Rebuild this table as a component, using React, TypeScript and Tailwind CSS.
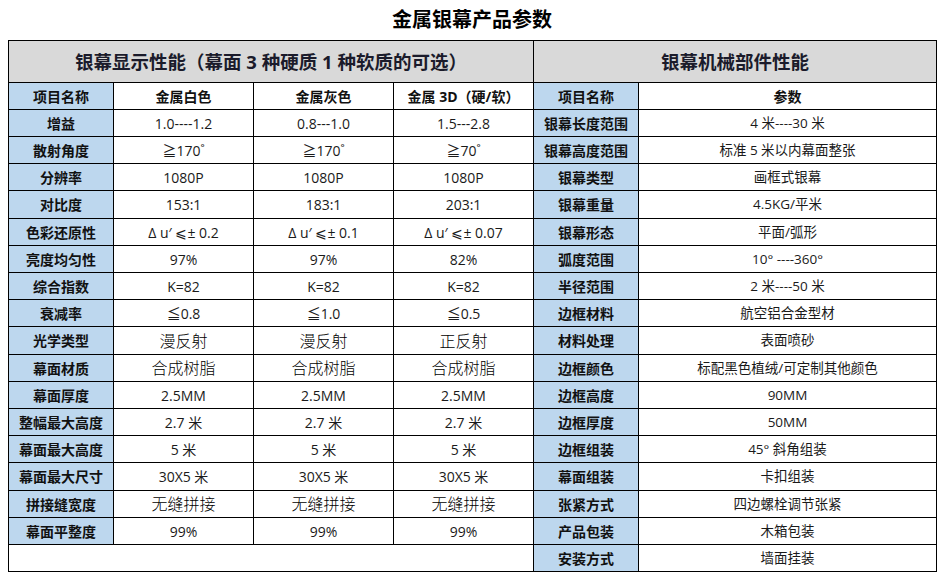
const leftRows: [string, string, string, string][] = [
  ["增益", "1.0----1.2", "0.8---1.0", "1.5---2.8"],
  ["散射角度", "≧170˚", "≧170˚", "≧70˚"],
  ["分辨率", "1080P", "1080P", "1080P"],
  ["对比度", "153:1", "183:1", "203:1"],
  ["色彩还原性", "Δ u′  ⩽± 0.2", "Δ u′  ⩽± 0.1", "Δ u′  ⩽± 0.07"],
  ["亮度均匀性", "97%", "97%", "82%"],
  ["综合指数", "K=82", "K=82", "K=82"],
  ["衰减率", "≦0.8", "≦1.0", "≦0.5"],
  ["光学类型", "漫反射", "漫反射", "正反射"],
  ["幕面材质", "合成树脂", "合成树脂", "合成树脂"],
  ["幕面厚度", "2.5MM", "2.5MM", "2.5MM"],
  ["整幅最大高度", "2.7 米", "2.7 米", "2.7 米"],
  ["幕面最大高度", "5 米", "5 米", "5 米"],
  ["幕面最大尺寸", "30X5 米", "30X5 米", "30X5 米"],
  ["拼接缝宽度", "无缝拼接", "无缝拼接", "无缝拼接"],
  ["幕面平整度", "99%", "99%", "99%"],
];

const rightRows: [string, string][] = [
  ["银幕长度范围", "4 米----30 米"],
  ["银幕高度范围", "标准 5 米以内幕面整张"],
  ["银幕类型", "画框式银幕"],
  ["银幕重量", "4.5KG/平米"],
  ["银幕形态", "平面/弧形"],
  ["弧度范围", "10° ----360°"],
  ["半径范围", "2 米----50 米"],
  ["边框材料", "航空铝合金型材"],
  ["材料处理", "表面喷砂"],
  ["边框颜色", "标配黑色植绒/可定制其他颜色"],
  ["边框高度", "90MM"],
  ["边框厚度", "50MM"],
  ["边框组装", "45° 斜角组装"],
  ["幕面组装", "卡扣组装"],
  ["张紧方式", "四边螺栓调节张紧"],
  ["产品包装", "木箱包装"],
  ["安装方式", "墙面挂装"],
];

const cjk = "font-['Open_Sans','Noto_Sans_CJK_SC',sans-serif]";
const cell = "border border-black text-center align-middle p-0";
const label = `${cell} bg-[#bdd7ee] font-bold text-[14px] text-[#111]`;
const val = `${cell} bg-white text-[14px] text-[#1a1a1a]`;

export default function App() {
  // left side: header row + 16 data rows, then one blank row
  const rows = [
    { left: ["项目名称", "金属白色", "金属灰色", "金属 3D（硬/软）"] as string[] | null, head: true },
    ...leftRows.map((r) => ({ left: r as string[] | null, head: false })),
    { left: null, head: false },
  ];

  return (
    <div className={`w-[944px] h-[582px] bg-white ${cjk}`}>
      <h1 className="h-[40px] flex items-center justify-center text-[20px] font-bold text-black pb-[1px]">
        金属银幕产品参数
      </h1>
      <table className="ml-[8px] w-[929px] table-fixed border-collapse border-[1.5px] border-black">
        <colgroup>
          <col className="w-[105px]" />
          <col className="w-[140px]" />
          <col className="w-[140px]" />
          <col className="w-[140px]" />
          <col className="w-[105px]" />
          <col />
        </colgroup>
        <tbody>
          <tr className="h-[42px]">
            <td colSpan={4} className={`${cell} bg-[#d9d9d9] font-bold text-[18.5px] text-[#1b1b2b]`}>
              银幕显示性能（幕面 3 种硬质 1 种软质的可选）
            </td>
            <td colSpan={2} className={`${cell} bg-[#d9d9d9] font-bold text-[18.5px] text-[#1b1b2b]`}>
              银幕机械部件性能
            </td>
          </tr>
          {rows.map((row, i) => {
            const right = i === 0 ? ["项目名称", "参数"] : rightRows[i - 1];
            const h = i % 5 === 4 ? "h-[28px]" : "h-[27px]";
            return (
              <tr key={i} className={h}>
                {row.left ? (
                  <>
                    <td className={label}>{row.left[0]}</td>
                    {row.left.slice(1).map((v, j) => (
                      <td
                        key={j}
                        className={
                          row.head
                            ? `${cell} bg-white font-bold text-[14px] text-[#111]`
                            : /[\u4e00-\u9fa5]{3,}/.test(v)
                            ? `${cell} bg-white text-[16px] font-light text-black`
                            : val
                        }
                      >
                        {v}
                      </td>
                    ))}
                  </>
                ) : (
                  <td colSpan={4} className="border border-black bg-white" />
                )}
                <td className={label}>{right[0]}</td>
                <td
                  className={
                    i === 0
                      ? `${cell} bg-white font-bold text-[14px] text-[#111]`
                      : `${cell} bg-white text-[13.5px] text-[#1a1a1a]`
                  }
                >
                  {right[1]}
                </td>
              </tr>
            );
          })}
        </tbody>
      </table>
    </div>
  );
}
